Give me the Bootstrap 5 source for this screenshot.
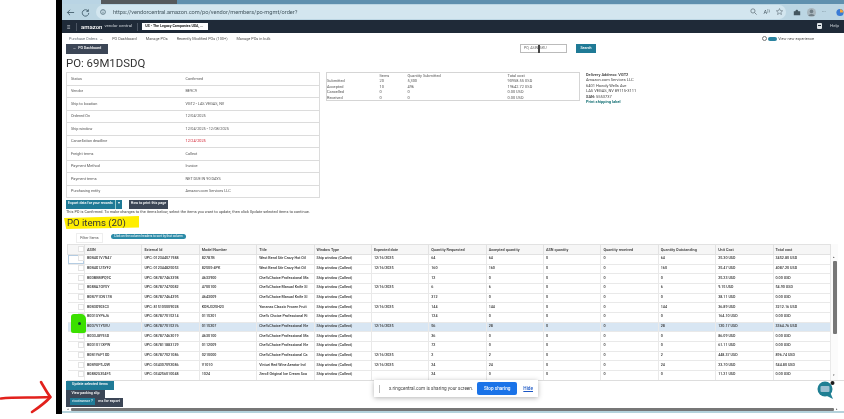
<!DOCTYPE html>
<html lang="en">
<head>
<meta charset="utf-8">
<title>PO 69M1DSDQ</title>
<link href="https://cdn.jsdelivr.net/npm/bootstrap@5.3.0/dist/css/bootstrap.min.css" rel="stylesheet">
<style>
html,body{width:844px;height:419px;overflow:hidden;background:#fff;font-family:Roboto,"Liberation Sans",sans-serif;color:#3a3f44}
.shell{height:414px}
.gutter{width:56px;flex:none;position:relative}
.gutter svg{position:absolute;left:0;top:376px}
.edge{width:6px;flex:none;background:#000}
.main{width:782px;flex:none;position:relative;overflow:hidden;filter:blur(.45px);background:#fff}
.tabstrip{height:4px;background:linear-gradient(90deg,#b9d4e4 0,#b9d4e4 5%,#55595c 5%,#55595c 14.7%,#5f90ae 14.7%)}
.addr{height:16px;background:#bcd6e3;gap:6px;padding:0 0 0 4px}
.addr svg{flex:none}
.urlpill{height:14px;background:#d3e6ef;border-radius:7px;width:690px;flex:none;font-size:5.65px;color:#44565f;gap:3px;padding:0 3px 0 4px}
.pillicons{gap:6px}
.tb1{margin-left:1px}.tb2{margin-left:0}
.tbdots{font-size:5px;color:#44565f;width:8px}
.amz{height:13px;background:#1f2a38;color:#c9ced4;font-size:4.4px;padding:0 5px}
.amz b{color:#fff;font-size:6px;margin:0 2px 0 0;font-weight:500}
.burger{font-size:6px;width:9px}
.vsep{width:1px;height:8px;background:#4b5563;margin:0 4px 0 0}
.vsep2{margin:0 4px 0 5px}
.sel{background:#fff;color:#222;font-size:3.6px;font-weight:700;padding:1px 3px;height:7px;width:66px;line-height:5px;white-space:nowrap}
.subnav{height:11px;padding:1px 4px 0 7px;font-size:3.85px;gap:9px;color:#555}
.tog{width:9px;height:4px;border-radius:2px;background:#2a83a0;display:inline-block;margin:0 1px 0 1px}
.acts{height:11px;padding:0 4px}
.b-dark,.b-teal{font-size:3.6px;line-height:1;border:0;border-radius:0;color:#fff;padding:0 3px;font-weight:500;white-space:nowrap}
.b-dark{background:#3c4656}
.b-teal{background:#1f7a96}
.b-dark:hover{background:#3c4656;color:#fff}.b-teal:hover{background:#1f7a96;color:#fff}
.backbtn{width:42px;height:10px}
.srch{margin-left:412px;gap:9px}
.srchin{width:47px;height:9px;border:1px solid #bbb;font-size:3.6px;padding:0 3px;line-height:7px;color:#666;position:relative}
.srchin i{position:absolute;left:17px;top:0;width:2px;height:8px;background:#444}
.srchbtn{width:20px;height:9px}
.ttl{font-size:11.4px;font-weight:400;margin:0;padding:2px 4px 0;height:17px;line-height:13px;color:#333}
.upper{padding-left:4px;gap:6px;height:125px}
.det{width:254px;height:125px;margin:0;font-size:3.8px;border-color:#d9d9d9}
.det.table>tbody>tr>td{padding:0 4px;height:12.5px;vertical-align:middle;color:#555;border:0;border-bottom:1px solid #dcdcdc;background:#fff}
.det{border:1px solid #dcdcdc;table-layout:fixed}
.det td:first-child{width:115px}
.red{color:#d11a2a!important}
.sumwrap{width:254px}
.sumt{width:254px;height:29px;margin:0;font-size:3.9px;table-layout:fixed;border:1px solid #d5d5d5}
.sumt.table>tbody>tr>td{padding:0;height:5.4px;line-height:5px;border:0;color:#555;background:#fff}
.sumt td:nth-child(1){width:53px}.sumt td:nth-child(2){width:28px}.sumt td:nth-child(3){width:100px}
.deliv{font-size:4px;line-height:5.4px;color:#444;margin-left:0}
.deliv b{font-weight:600}
.deliv .lnk{color:#0a6a6e;font-weight:600}
.ctl{padding:3px 4px 0;gap:7px;height:12px}
.ctl .btn{height:8.5px;padding:0}
.exp{width:49px}.prt{width:39px}
.caret{border-left:1px solid #9cc!important;width:7px}
.note{font-size:3.9px;color:#444;padding:0 4px;height:5px;line-height:5px;margin:0}
.poh{height:13px;margin:2px 0 0 2px;width:75px;background:#ffee00;clip-path:polygon(0 15%,100% 0,100% 88%,3% 100%);font-size:9.6px;line-height:13px;padding-left:3px;color:#333;font-weight:400}
.filt{padding:4px 0 0 14px;gap:8px;height:15px}
.fbtn{width:27px;height:10px;border:1px solid #eee;font-size:3.7px;line-height:8px;text-align:center;color:#555}
.hint{background:#2b8ba8;color:#fff;font-size:3.05px;line-height:4px;height:5px;border-radius:3px;padding:0 3px;margin-top:1px;white-space:nowrap}
.gridbox{margin-left:5px;height:137px;overflow:hidden;border-bottom:1px solid #ddd}
.grid{width:764px;margin:0;table-layout:fixed;font-size:3.7px;font-weight:500}
.grid.table>thead>tr>th{padding:0 2px;height:10px;font-size:3.8px;line-height:1;vertical-align:middle;border:1px solid #e2e2e2;background:#f6f6f6;color:#444;font-weight:600;white-space:nowrap;overflow:hidden}
.grid.table>tbody>tr>td{padding:0 2px;height:9.67px;line-height:1;vertical-align:middle;border:0;border-bottom:1px solid #e9e9e9;border-right:1px solid #e9e9e9;color:#333;background:#fff;white-space:nowrap;overflow:hidden}
.grid.table>tbody>tr.hl>td{background:#d8e6f3}
.grid.table>tbody>tr>td.focused{box-shadow:inset 0 0 0 1px #b4cce2}
.grid .chk{width:17px}
.cb{display:block;width:6px;height:6px;border:1px solid #e4e4e4;background:#fff;margin:-1px 0 1px 8px}
.vs{width:7px;position:relative;background:#fbfbfb;font-size:3px;color:#555}
.vs i{position:absolute;left:2px;top:17px;width:4px;height:73px;background:#777;border-radius:1px}
.vs span{position:absolute;left:2px;line-height:3px}
.vs .up{top:12px}.vs .dn{top:130px}
.below{height:26px;padding-left:4px;position:relative}
.below .btn{display:block;height:8.5px}
.u1{width:48px}.u2{width:39px}.u3{width:57px;text-align:right}
.rc{position:absolute;left:8px;top:17px;width:25px;height:7px;background:#1f7a96;color:#fff;font-size:3.7px;line-height:7px;text-align:center}
.hsb{height:4px;padding-left:5px;gap:2px}
.hsb i{display:block;height:3px;background:#777;width:763px;border-radius:1px}
.hsb span{font-size:3px;line-height:3px;color:#555}
.btm{height:2px;background:#b5d2db}
.share{position:absolute;left:312px;top:380px;width:164px;height:17px;background:#fff;box-shadow:0 1px 5px rgba(0,0,0,.3);font-size:4.7px;padding:0 5px 0 5px;color:#444;white-space:nowrap}
.stop{width:41px;height:13px;background:#1a73e8;color:#fff;border:0;border-radius:2px;font-size:4.7px;padding:0;margin:0 6px 0 4px;font-weight:500}
.hide{color:#1a56c4;text-decoration:underline;font-weight:500}
.hand{width:1px;height:8px;background:#bbb;margin-right:9px;flex:none}
.chat{position:absolute;left:754px;top:380px}
.grn{position:absolute;left:9px;top:314px;width:15px;height:19px;background:#3be000;border-radius:3px 5px 2px 2px}
.grn i{position:absolute;left:7px;top:8px;width:3px;height:3px;border-radius:50%;background:#143}
</style>
</head>
<body>
<div class="shell d-flex">
  <div class="gutter">
    <svg width="56" height="40" viewBox="0 0 56 40"><path d="M1 22.500C15 21 33 22 50 21" fill="none" stroke="#e2211c" stroke-width="2.600" stroke-linecap="round"/><path d="M41 6C44 11 47 17 50.500 21C45 27 38 32 32 36" fill="none" stroke="#e2211c" stroke-width="2.600" stroke-linecap="round" stroke-linejoin="round"/></svg>
  </div>
  <div class="edge"></div>
  <div class="main">
    <div class="tabstrip"></div>
    <div class="addr d-flex align-items-center">
      <svg width="9" height="9" viewBox="0 0 10 10"><path d="M9 5H1.500M4.500 2 1.500 5l3 3" fill="none" stroke="#46606e" stroke-width="1"/></svg>
      <svg width="9" height="9" viewBox="0 0 10 10"><path d="M8 3.500A3.600 3.600 0 1 0 8.600 5.500M8.200 1.500V3.800H6" fill="none" stroke="#46606e" stroke-width="1"/></svg>
      <div class="urlpill d-flex align-items-center">
        <svg width="6" height="6" viewBox="0 0 10 10"><circle cx="5" cy="5" r="4" fill="none" stroke="#46606e" stroke-width="1.200"/><path d="M5 4.500V7.500M5 2.500V3.500" stroke="#46606e" stroke-width="1.200"/></svg>
        <span class="ms-1">https://vendorcentral.amazon.com/po/vendor/members/po-mgmt/order?</span>
        <span class="ms-auto d-flex align-items-center pillicons">
          <svg width="7" height="7" viewBox="0 0 10 10"><circle cx="4.200" cy="4.200" r="3" fill="none" stroke="#5b6a73"/><path d="M6.500 6.500 9.500 9.500" stroke="#5b6a73"/></svg>
          <span>A<sup>))</sup></span>
          <svg width="7" height="7" viewBox="0 0 10 10"><path d="M5 .8 6.300 3.700 9.500 4 7 6.100 7.800 9.300 5 7.600 2.200 9.300 3 6.100.5 4 3.700 3.700Z" fill="none" stroke="#5b6a73" stroke-width=".8"/></svg>
        </span>
      </div>
      <svg width="8" height="8" viewBox="0 0 10 10" class="tb1"><path d="M1 4H3C3 1.500 6.500 1.500 6.500 4H9V9H1Z" fill="#44565f"/></svg>
      <svg width="9" height="9" viewBox="0 0 10 10" class="tb2"><circle cx="5" cy="5" r="5" fill="#a9b7be"/><circle cx="5" cy="3.800" r="2" fill="#6f7e86"/><path d="M1.500 9C2 6 8 6 8.500 9Z" fill="#6f7e86"/></svg>
      <span class="tbdots">···</span>
      <svg width="8" height="9" viewBox="0 0 10 10"><circle cx="5" cy="5" r="4.500" fill="#3a7bd5"/><path d="M5 1A4 4 0 0 1 9 5H5Z" fill="#f2a33a"/></svg>
    </div>
    <div class="amz d-flex align-items-center">
      <span class="burger">≡</span><span class="vsep"></span>
      <b>amazon</b><span>vendor central</span><span class="vsep vsep2"></span>
      <span class="sel">US - The Legacy Companies USA, ...</span>
      <span class="ms-auto d-flex align-items-center gap-2">
        <svg width="5" height="6" viewBox="0 0 5 6"><rect width="5" height="6" rx="1" fill="#dfe3e6"/><rect x="1" y="2" width="3" height="1" fill="#1f2a38"/></svg>
        <span>Help</span>
      </span>
    </div>
    <div class="subnav d-flex align-items-center">
      <span class="text-secondary">Purchase Orders &nbsp;→</span><span>PO Dashboard</span><span>Manage POs</span><span>Recently Modified POs (100+)</span><span>Manage POs in bulk</span>
      <span class="ms-auto d-flex align-items-center">
        <svg width="5" height="5" viewBox="0 0 10 10"><circle cx="5" cy="5" r="4" fill="none" stroke="#777" stroke-width="2"/></svg>
        <span class="tog"></span><span>View new experience</span>
      </span>
      <span style="width:17px"></span>
    </div>
    <div class="acts d-flex align-items-start">
      <button class="btn b-dark backbtn">←&nbsp; PO Dashboard</button>
      <div class="srch d-flex">
        <div class="srchin">PO, ASIN, SKU<i></i></div>
        <button class="btn b-teal srchbtn">Search</button>
      </div>
    </div>
    <h1 class="ttl">PO: 69M1DSDQ</h1>
    <div class="upper d-flex align-items-start">
      <table class="table det">
        <tbody>
          <tr><td>Status</td><td>Confirmed</td></tr>
          <tr><td>Vendor</td><td>BE9C9</td></tr>
          <tr><td>Ship to location</td><td>VGT2 - LAS VEGAS, NV</td></tr>
          <tr><td>Ordered On</td><td>12/04/2025</td></tr>
          <tr><td>Ship window</td><td>12/04/2025 - 12/08/2025</td></tr>
          <tr><td>Cancellation deadline</td><td class="red">12/24/2025</td></tr>
          <tr><td>Freight terms</td><td>Collect</td></tr>
          <tr><td>Payment Method</td><td>Invoice</td></tr>
          <tr><td>Payment terms</td><td>NET DUE IN 90 DAYS</td></tr>
          <tr><td>Purchasing entity</td><td>Amazon.com Services LLC</td></tr>
        </tbody>
      </table>
      <div class="sumwrap">
        <table class="table sumt">
          <tbody>
            <tr><td></td><td>Items</td><td>Quantity Submitted</td><td>Total cost</td></tr>
            <tr><td>Submitted</td><td>20</td><td>5,300</td><td>90958.55 USD</td></tr>
            <tr><td>Accepted</td><td>10</td><td>496</td><td>19642.72 USD</td></tr>
            <tr><td>Cancelled</td><td>0</td><td>0</td><td>0.00 USD</td></tr>
            <tr><td>Received</td><td>0</td><td>0</td><td>0.00 USD</td></tr>
          </tbody>
        </table>
      </div>
      <div class="deliv">
        <b>Delivery Address: VGT2</b><br>Amazon.com Services LLC<br>6401 Howdy Wells Ave<br>LAS VEGAS, NV 89115-3111<br><b>SAN:</b> 5553737<br><span class="lnk">Print shipping label</span>
      </div>
    </div>
    <div class="ctl d-flex">
      <div class="d-flex">
        <button class="btn b-teal exp">Export data for your records</button><button class="btn b-teal caret">▾</button>
      </div>
      <button class="btn b-dark prt">How to print this page</button>
    </div>
    <p class="note">This PO is Confirmed. To make changes to the items below, select the items you want to update, then click Update selected items to continue.</p>
    <div class="poh">PO items (20)</div>
    <div class="filt d-flex align-items-start">
      <div class="fbtn">Filter Items</div>
      <div class="hint">Click on the column headers to sort by that column</div>
    </div>
    <div class="d-flex gridbox">
      <table class="table grid">
        <thead>
          <tr><th class="chk"><span class="cb"></span></th><th>ASIN</th><th>External Id</th><th>Model Number</th><th>Title</th><th>Window Type</th><th>Expected date</th><th>Quantity Requested</th><th>Accepted quantity</th><th>ASN quantity</th><th>Quantity received</th><th>Quantity Outstanding</th><th>Unit Cost</th><th>Total cost</th></tr>
        </thead>
        <tbody>
          <tr><td class="focused"><span class="cb"></span></td><td>B0B4X1V7N47</td><td>UPC: 012344071988</td><td>82787B</td><td>West Bend Stir Crazy Hot Oil</td><td>Ship window (Collect)</td><td>12/16/2025</td><td>64</td><td>64</td><td>0</td><td>0</td><td>64</td><td>25.30 USD</td><td>3452.80 USD</td></tr>
          <tr><td><span class="cb"></span></td><td>B0B4X1Z5YF2</td><td>UPC: 012344825053</td><td>82505-4PK</td><td>West Bend Stir Crazy Hot Oil</td><td>Ship window (Collect)</td><td>12/16/2025</td><td>160</td><td>160</td><td>0</td><td>0</td><td>160</td><td>25.47 USD</td><td>4087.20 USD</td></tr>
          <tr><td><span class="cb"></span></td><td>B0DBBMPQ9C</td><td>UPC: 087877463398</td><td>4633900</td><td>Chef'sChoice Professional Ma</td><td>Ship window (Collect)</td><td></td><td>12</td><td>0</td><td>0</td><td>0</td><td>0</td><td>25.23 USD</td><td>0.00 USD</td></tr>
          <tr><td><span class="cb"></span></td><td>B08BA7OY5Y</td><td>UPC: 087877470082</td><td>4700100</td><td>Chef'sChoice Manual Knife Sl</td><td>Ship window (Collect)</td><td>12/16/2025</td><td>6</td><td>6</td><td>0</td><td>0</td><td>6</td><td>9.15 USD</td><td>54.90 USD</td></tr>
          <tr><td><span class="cb"></span></td><td>B0B7Y1DN17B</td><td>UPC: 087877464395</td><td>4643009</td><td>Chef'sChoice Manual Knife Sl</td><td>Ship window (Collect)</td><td></td><td>312</td><td>0</td><td>0</td><td>0</td><td>0</td><td>38.11 USD</td><td>0.00 USD</td></tr>
          <tr><td><span class="cb"></span></td><td>B0B3X903C3</td><td>UPC: 815105009028</td><td>KDRJ325H23</td><td>Yonanas Classic Frozen Fruit</td><td>Ship window (Collect)</td><td>12/16/2025</td><td>144</td><td>144</td><td>0</td><td>0</td><td>144</td><td>36.89 USD</td><td>3212.16 USD</td></tr>
          <tr><td><span class="cb"></span></td><td>B0D1SYP6J6</td><td>UPC: 087877015214</td><td>0115201</td><td>Chef's Choice Professional Ri</td><td>Ship window (Collect)</td><td></td><td>124</td><td>0</td><td>0</td><td>0</td><td>0</td><td>164.10 USD</td><td>0.00 USD</td></tr>
          <tr class="hl"><td><span class="cb"></span></td><td>B0D7V1Y5VU</td><td>UPC: 087877015276</td><td>0115207</td><td>Chef'sChoice Professional Ele</td><td>Ship window (Collect)</td><td>12/16/2025</td><td>56</td><td>28</td><td>0</td><td>0</td><td>28</td><td>120.17 USD</td><td>3364.76 USD</td></tr>
          <tr><td><span class="cb"></span></td><td>B0D3J8Y9SD</td><td>UPC: 087877463019</td><td>4630100</td><td>Chef'sChoice Professional Ma</td><td>Ship window (Collect)</td><td></td><td>36</td><td>0</td><td>0</td><td>0</td><td>0</td><td>86.09 USD</td><td>0.00 USD</td></tr>
          <tr><td><span class="cb"></span></td><td>B0D1011XPW</td><td>UPC: 087811883129</td><td>0112009</td><td>Chef'sChoice Professional Ele</td><td>Ship window (Collect)</td><td></td><td>72</td><td>0</td><td>0</td><td>0</td><td>0</td><td>61.11 USD</td><td>0.00 USD</td></tr>
          <tr><td><span class="cb"></span></td><td>B0B1Y6P1XD</td><td>UPC: 087877021086</td><td>0210000</td><td>Chef'sChoice Professional Ca</td><td>Ship window (Collect)</td><td>12/16/2025</td><td>2</td><td>2</td><td>0</td><td>0</td><td>2</td><td>448.37 USD</td><td>896.74 USD</td></tr>
          <tr><td><span class="cb"></span></td><td>B0B9UP5J2W</td><td>UPC: 034307092086</td><td>V1010</td><td>Vinturi Red Wine Aerator Ind</td><td>Ship window (Collect)</td><td>12/16/2025</td><td>24</td><td>24</td><td>0</td><td>0</td><td>24</td><td>23.70 USD</td><td>544.80 USD</td></tr>
          <tr><td><span class="cb"></span></td><td>B08B2S354F5</td><td>UPC: 034256010048</td><td>1024</td><td>Zeroll Original Ice Cream Sco</td><td>Ship window (Collect)</td><td></td><td>24</td><td>0</td><td>0</td><td>0</td><td>0</td><td>11.21 USD</td><td>0.00 USD</td></tr>
        </tbody>
      </table>
      <div class="vs"><span class="up">▴</span><i></i><span class="dn">▾</span></div>
    </div>
    <div class="below">
      <button class="btn b-teal u1">Update selected items</button>
      <button class="btn b-dark u2">View packing slip</button>
      <button class="btn b-dark u3">ms for export</button>
      <span class="rc">ricotranscr ?</span>
    </div>
    <div class="hsb d-flex align-items-center"><span>◂</span><i></i><span>▸</span></div>
    <div class="btm"></div>
    <div class="grn"><i></i></div>
    <div class="share d-flex align-items-center">
      <span class="hand"></span>
      <span>x.ringcentral.com is sharing your screen.</span>
      <button class="btn stop">Stop sharing</button>
      <span class="hide">Hide</span>
    </div>
    <svg class="chat" width="20" height="20" viewBox="0 0 20 20">
      <circle cx="9" cy="9" r="7.500" fill="#1f7f93"/><path d="M9 15 17 19 14 12Z" fill="#1f7f93"/>
      <rect x="4.500" y="6" width="9" height="6" rx="1" fill="#9bbfd0"/>
      <circle cx="16.500" cy="3" r="2" fill="#1b1b1b"/>
    </svg>
  </div>
</div>
</body>
</html>
